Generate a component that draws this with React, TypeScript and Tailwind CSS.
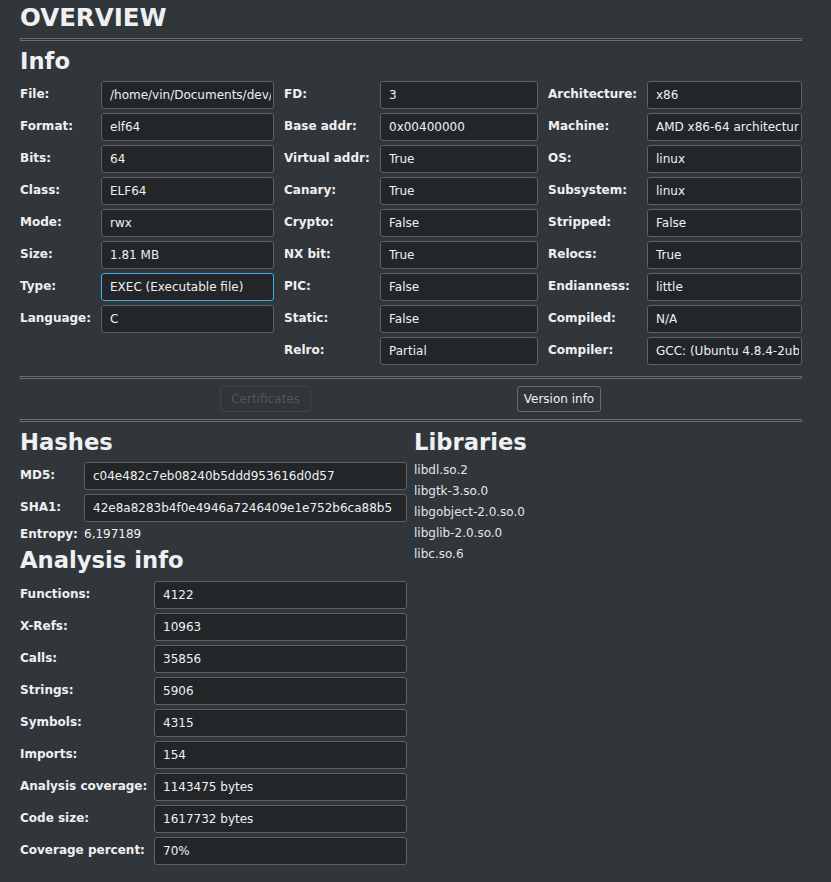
import React from "react";

const font = { fontFamily: '"DejaVu Sans", "Liberation Sans", sans-serif' };

function Sep() {
  return <div className="h-[3px] w-full border border-[#6b6f73] bg-[#2b2f33]" />;
}

function Field({ value, focus }: { value: string; focus?: boolean }) {
  return (
    <div
      className={
        "h-[28px] flex-1 min-w-0 flex items-center rounded-[3px] border bg-[#232629] pl-[8px] pr-[2px] text-[12px] text-[#eff0f1] overflow-hidden whitespace-nowrap " +
        (focus ? "border-[#3daee9]" : "border-[#5e6266]")
      }
    >
      <span className="overflow-hidden">{value}</span>
    </div>
  );
}

function Row({ label, value, lw, focus }: { label: string; value: string; lw: string; focus?: boolean }) {
  return (
    <div className="flex items-start">
      <div className={lw + " shrink-0 h-[26px] flex items-center text-[12px] font-bold text-[#eff0f1] whitespace-nowrap"}>{label}</div>
      <Field value={value} focus={focus} />
    </div>
  );
}

const col1: [string, string][] = [
  ["File:", "/home/vin/Documents/dev/"],
  ["Format:", "elf64"],
  ["Bits:", "64"],
  ["Class:", "ELF64"],
  ["Mode:", "rwx"],
  ["Size:", "1.81 MB"],
  ["Type:", "EXEC (Executable file)"],
  ["Language:", "C"],
];
const col2: [string, string][] = [
  ["FD:", "3"],
  ["Base addr:", "0x00400000"],
  ["Virtual addr:", "True"],
  ["Canary:", "True"],
  ["Crypto:", "False"],
  ["NX bit:", "True"],
  ["PIC:", "False"],
  ["Static:", "False"],
  ["Relro:", "Partial"],
];
const col3: [string, string][] = [
  ["Architecture:", "x86"],
  ["Machine:", "AMD x86-64 architecture"],
  ["OS:", "linux"],
  ["Subsystem:", "linux"],
  ["Stripped:", "False"],
  ["Relocs:", "True"],
  ["Endianness:", "little"],
  ["Compiled:", "N/A"],
  ["Compiler:", "GCC: (Ubuntu 4.8.4-2ubuntu1~14.04.3) 4.8.4"],
];
const analysis: [string, string][] = [
  ["Functions:", "4122"],
  ["X-Refs:", "10963"],
  ["Calls:", "35856"],
  ["Strings:", "5906"],
  ["Symbols:", "4315"],
  ["Imports:", "154"],
  ["Analysis coverage:", "1143475 bytes"],
  ["Code size:", "1617732 bytes"],
  ["Coverage percent:", "70%"],
];
const libs = ["libdl.so.2", "libgtk-3.so.0", "libgobject-2.0.so.0", "libglib-2.0.so.0", "libc.so.6"];

export default function App() {
  return (
    <div className="w-[831px] h-[882px] bg-[#31363b] text-[#eff0f1] overflow-hidden" style={font}>
      <div className="pl-[20px] pr-[29px] pt-[4px]">
        <div className="text-[24.5px] font-bold leading-[28px]">OVERVIEW</div>
        <div className="mt-[6px]">
          <Sep />
        </div>
        <div className="mt-[7px] text-[22.7px] font-bold leading-[27px]">Info</div>
        <div className="mt-[6px] grid grid-cols-3 gap-x-[10px]">
          <div className="flex flex-col gap-[4px]">
            {col1.map(([l, v]) => (
              <Row key={l} label={l} value={v} lw="w-[81px]" focus={l === "Type:"} />
            ))}
          </div>
          <div className="flex flex-col gap-[4px]">
            {col2.map(([l, v]) => (
              <Row key={l} label={l} value={v} lw="w-[96px]" />
            ))}
          </div>
          <div className="flex flex-col gap-[4px]">
            {col3.map(([l, v]) => (
              <Row key={l} label={l} value={v} lw="w-[99px]" />
            ))}
          </div>
        </div>
        <div className="mt-[11px]">
          <Sep />
        </div>
        <div className="mt-[7px] flex h-[26px]">
          <div className="ml-[200px] w-[91px] h-[26px] flex items-center justify-center rounded-[3px] border border-[#3f444a] text-[12px] text-[#50555b]">
            Certificates
          </div>
          <div className="ml-[206px] w-[84px] h-[26px] flex items-center justify-center rounded-[3px] border border-[#696d71] text-[12px] text-[#eff0f1]">
            Version info
          </div>
        </div>
        <div className="mt-[7px]">
          <Sep />
        </div>
        <div className="mt-[7px] flex gap-[7px]">
          <div className="w-[387px] shrink-0">
            <div className="text-[22.7px] font-bold leading-[27px]">Hashes</div>
            <div className="mt-[6px] flex flex-col gap-[4px]">
              <Row label="MD5:" value="c04e482c7eb08240b5ddd953616d0d57" lw="w-[64px]" />
              <Row label="SHA1:" value="42e8a8283b4f0e4946a7246409e1e752b6ca88b5" lw="w-[64px]" />
            </div>
            <div className="mt-[5px] flex text-[12px] leading-[14px]">
              <div className="w-[64px] font-bold">Entropy:</div>
              <div>6,197189</div>
            </div>
            <div className="mt-[6px] text-[22.7px] font-bold leading-[27px]">Analysis info</div>
            <div className="mt-[7px] flex flex-col gap-[4px]">
              {analysis.map(([l, v]) => (
                <Row key={l} label={l} value={v} lw="w-[134px]" />
              ))}
            </div>
          </div>
          <div className="flex-1">
            <div className="text-[22.7px] font-bold leading-[27px]">Libraries</div>
            <div className="mt-[4px] flex flex-col text-[12px] leading-[21px] text-[#e4e5e6]">
              {libs.map((l) => (
                <div key={l}>{l}</div>
              ))}
            </div>
          </div>
        </div>
      </div>
    </div>
  );
}
